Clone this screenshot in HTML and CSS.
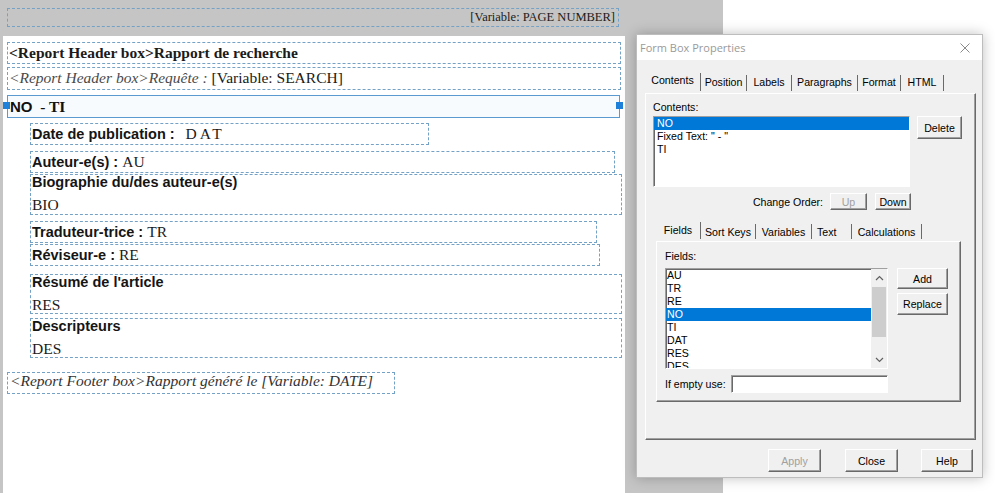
FILE: index.html
```html
<!DOCTYPE html>
<html lang="fr">
<head>
<meta charset="utf-8">
<title>Form Box Properties</title>
<link rel="stylesheet" href="styles.css">
</head>
<body>
<div class="screen">
  <div class="workspace">
    <div class="band">
      <div class="dbox pagenum">[Variable: PAGE NUMBER]</div>
    </div>
    <div class="page">
      <div class="dbox hdr1">&lt;Report Header box&gt;Rapport de recherche</div>
      <div class="dbox hdr2"><i class="note">&lt;Report Header box&gt;Requête :</i> [Variable: SEARCH]</div>
      <div class="selbox"><span class="handle hl"></span><b class="sans">NO</b><b class="serifb">&nbsp; - TI</b><span class="handle hr"></span></div>
      <div class="dbox field f-date"><span class="lbl">Date de publication :</span> <span class="val dat">&nbsp;DAT</span></div>
      <div class="dbox field f-aut"><span class="lbl">Auteur-e(s) :</span> <span class="val">AU</span></div>
      <div class="dbox field two f-bio"><span class="lbl">Biographie du/des auteur-e(s)</span><span class="val">BIO</span></div>
      <div class="dbox field f-trad"><span class="lbl">Traduteur-trice :</span> <span class="val">TR</span></div>
      <div class="dbox field f-rev"><span class="lbl">Réviseur-e :</span> <span class="val">RE</span></div>
      <div class="dbox field two f-res"><span class="lbl">Résumé de l'article</span><span class="val">RES</span></div>
      <div class="dbox field two f-des"><span class="lbl">Descripteurs</span><span class="val">DES</span></div>
      <div class="dbox footer"><i>&lt;Report Footer box&gt;Rapport généré le [Variable: DATE]</i></div>
    </div>
  </div>

  <div class="dialog">
    <div class="titlebar">
      <span>Form Box Properties</span>
      <svg class="closex" width="10" height="10" viewBox="0 0 10 10"><path d="M0.5 0.5 L9.5 9.5 M9.5 0.5 L0.5 9.5" stroke="#8a8a8a" stroke-width="1" fill="none"/></svg>
    </div>
    <div class="dbody">
      <div class="tabs outer-tabs">
        <div class="tab on">Contents</div>
        <div class="tab">Position</div>
        <div class="tab">Labels</div>
        <div class="tab">Paragraphs</div>
        <div class="tab">Format</div>
        <div class="tab">HTML</div>
      </div>
      <div class="panel outer-panel">
        <div class="dlabel">Contents:</div>
        <div class="row1">
          <div class="listbox list1">
            <div class="item sel">NO</div>
            <div class="item">Fixed Text: " - "</div>
            <div class="item">TI</div>
          </div>
          <div class="btn b-delete">Delete</div>
        </div>
        <div class="orderrow">
          <span>Change Order:</span>
          <div class="btn b-up disabled">Up</div>
          <div class="btn b-down">Down</div>
        </div>
        <div class="inner">
          <div class="tabs inner-tabs">
            <div class="tab on">Fields</div>
            <div class="tab">Sort Keys</div>
            <div class="tab">Variables</div>
            <div class="tab t-left">Text</div>
            <div class="tab">Calculations</div>
          </div>
          <div class="panel inner-panel">
            <div class="dlabel">Fields:</div>
            <div class="row2">
              <div class="listbox list2">
                <div class="items">
                  <div class="item">AU</div>
                  <div class="item">TR</div>
                  <div class="item">RE</div>
                  <div class="item sel">NO</div>
                  <div class="item">TI</div>
                  <div class="item">DAT</div>
                  <div class="item">RES</div>
                  <div class="item">DES</div>
                </div>
                <div class="scrollbar">
                  <div class="arrow"><svg width="9" height="6" viewBox="0 0 9 6"><path d="M1 5 L4.5 1.5 L8 5" stroke="#606060" stroke-width="1.2" fill="none"/></svg></div>
                  <div class="thumb"></div>
                  <div class="track"></div>
                  <div class="arrow"><svg width="9" height="6" viewBox="0 0 9 6"><path d="M1 1 L4.5 4.5 L8 1" stroke="#606060" stroke-width="1.2" fill="none"/></svg></div>
                </div>
              </div>
              <div class="sidebtns">
                <div class="btn b-add">Add</div>
                <div class="btn b-replace">Replace</div>
              </div>
            </div>
            <div class="emptyrow">
              <span class="emptylbl">If empty use:</span>
              <div class="input"></div>
            </div>
          </div>
        </div>
      </div>
      <div class="foot">
        <div class="btn b-apply disabled">Apply</div>
        <div class="btn b-close">Close</div>
        <div class="btn b-help">Help</div>
      </div>
    </div>
  </div>
</div>
</body>
</html>
```

FILE: styles.css
```css
* { box-sizing: border-box; margin: 0; padding: 0; }

body {
  margin: 0;
  width: 995px;
  height: 493px;
  overflow: hidden;
  background: #ffffff;
  font-family: "Liberation Serif", "Times New Roman", serif;
  color: #1b1b1b;
}

.screen {
  position: relative;
  display: flex;
  height: 493px;
}

/* ---------- report workspace ---------- */
.workspace {
  width: 723px;
  height: 493px;
  background: #c5c5c5;
  display: flex;
  flex-direction: column;
}

.band {
  height: 36px;
  padding: 8px 0 0 7px;
}

.page {
  margin-left: 3px;
  width: 622px;
  flex: 1;
  background: #ffffff;
  padding: 6px 0 0 4px;
}

.dbox { border: 1px dashed #74a2c6; }

.pagenum {
  width: 612px;
  height: 19px;
  text-align: right;
  font-size: 12.5px;
  line-height: 17px;
  padding-right: 3px;
}

.hdr1 {
  width: 614px;
  height: 22px;
  font-weight: bold;
  font-size: 15.5px;
  line-height: 19px;
  padding-left: 1px;
}

.hdr2 {
  margin-top: 3px;
  width: 614px;
  height: 23px;
  font-size: 15.5px;
  line-height: 19px;
  padding-left: 1px;
}
.hdr2 .note { color: #4a4a4a; }

.selbox {
  position: relative;
  margin-top: 5px;
  width: 613px;
  height: 23px;
  border: 1px solid #5a9ad0;
  background: #f8fbfe;
  line-height: 21px;
  padding-left: 2px;
  color: #111;
}
.selbox .sans {
  font-family: "Liberation Sans", Arial, sans-serif;
  font-size: 15px;
}
.selbox .serifb {
  font-family: "Liberation Serif", "Times New Roman", serif;
  font-size: 15.5px;
}

.handle {
  position: absolute;
  top: 6px;
  width: 7px;
  height: 7px;
  background: #1f80da;
}
.hl { left: -5px; }
.hr { right: -4px; }

.field {
  margin-left: 23px;
  height: 22px;
  line-height: 19px;
  padding-left: 1px;
  white-space: nowrap;
}
.lbl {
  font-family: "Liberation Sans", Arial, sans-serif;
  font-weight: bold;
  font-size: 14.5px;
  color: #151515;
}
.val { font-size: 15.5px; }
.dat { letter-spacing: 3px; }

.field.two { height: 40px; }
.field.two .lbl { display: block; line-height: 15px; }
.field.two .val { display: block; line-height: 17px; margin-top: 6px; }

.f-date { margin-top: 5px; width: 399px; }
.f-aut  { margin-top: 6px; width: 585px; }
.f-bio  { margin-top: 1px; width: 592px; height: 41px !important; }
.f-trad { margin-top: 6px; width: 567px; }
.f-rev  { margin-top: 1px; width: 570px; }
.f-res  { margin-top: 8px; width: 592px; }
.f-des  { margin-top: 4px; width: 592px; }

.footer {
  margin-top: 14px;
  width: 388px;
  height: 22px;
  font-size: 15.5px;
  line-height: 15px;
  padding-left: 2px;
  color: #333;
}

/* ---------- dialog ---------- */
.dialog {
  position: absolute;
  left: 636px;
  top: 34px;
  width: 347px;
  height: 444px;
  background: #f0f0f0;
  border: 1px solid #bdbdbd;
  box-shadow: 0 0 12px rgba(0, 0, 0, 0.25);
  font-family: "Liberation Sans", Arial, sans-serif;
  font-size: 10.6px;
  color: #000;
}

.titlebar {
  height: 25px;
  background: #ffffff;
  display: flex;
  align-items: center;
  justify-content: space-between;
  padding: 0 12px 0 3px;
  font-family: "Open Sans", "Noto Sans", sans-serif;
  font-size: 11px;
  color: #9a9a9a;
}

.dbody { padding: 13px 7px 0 8px; }

.tabs {
  display: grid;
  align-items: start;
}
.outer-tabs {
  height: 20px;
  width: 299px;
  grid-template-columns: 56px 46px 45px 66px 43px 43px;
}
.inner-tabs {
  height: 19px;
  width: 266px;
  grid-template-columns: 45px 55px 56px 40px 70px;
}
.tab {
  margin-top: 2px;
  height: 16px;
  line-height: 14px;
  text-align: center;
  border-right: 1px solid #6a6a6a;
  white-space: nowrap;
}
.tab.on { margin-top: 0; height: 18px; }
.inner-tabs .tab { height: 15px; line-height: 17px; }
.inner-tabs .tab.on { height: 17px; line-height: 17px; }
.t-left { text-align: left; padding-left: 5px; }

.panel {
  border-top: 1px solid #ffffff;
  border-left: 1px solid #ffffff;
  border-right: 1px solid #6a6a6a;
  border-bottom: 1px solid #6a6a6a;
  box-shadow: inset -1px -1px 0 #a0a0a0;
}
.outer-panel {
  width: 331px;
  height: 347px;
  padding: 7px 0 0 7px;
}

.dlabel { line-height: 13px; height: 13px; }

.listbox {
  background: #ffffff;
  border: 1px solid;
  border-color: #a0a0a0 #ffffff #ffffff #a0a0a0;
  box-shadow: inset 1px 1px 0 #696969;
  overflow: hidden;
}
.item {
  height: 13px;
  line-height: 13px;
  white-space: nowrap;
}
.item.sel { background: #0078d7; color: #ffffff; }

.row1 { display: flex; margin-top: 2px; }
.list1 { width: 257px; height: 71px; }
.list1 .item { padding-left: 3px; }

.btn {
  display: flex;
  align-items: center;
  justify-content: center;
  background: #f0f0f0;
  border: 1px solid;
  border-color: #ffffff #696969 #696969 #ffffff;
  box-shadow: inset -1px -1px 0 #a0a0a0;
}
.btn.disabled { color: #a0a0a0; }

.b-delete { margin-left: 7px; width: 45px; height: 23px; }

.orderrow {
  display: flex;
  justify-content: flex-end;
  align-items: center;
  width: 258px;
  height: 17px;
  margin-top: 6px;
}
.b-up { margin-left: 7px; width: 37px; height: 17px; }
.b-down { margin-left: 8px; width: 36px; height: 17px; }

.inner { margin: 12px 0 0 3px; width: 305px; }
.inner-panel {
  width: 305px;
  height: 161px;
  padding: 8px 0 0 8px;
}

.row2 { display: flex; margin-top: 5px; }
.list2 {
  display: flex;
  width: 223px;
  height: 101px;
}
.list2 .items { flex: 1; }
.list2 .item { padding-left: 1px; }

.scrollbar {
  width: 16px;
  display: flex;
  flex-direction: column;
  background: #f0f0f0;
}
.arrow {
  height: 17px;
  display: flex;
  align-items: center;
  justify-content: center;
}
.thumb {
  height: 50px;
  margin: 1px 1px 0 1px;
  background: #cdcdcd;
}
.track { flex: 1; }

.sidebtns { margin-left: 9px; display: flex; flex-direction: column; }
.b-add { width: 51px; height: 21px; }
.b-replace { width: 51px; height: 22px; margin-top: 4px; }

.emptyrow {
  display: flex;
  align-items: center;
  margin-top: 6px;
  height: 18px;
}
.emptylbl { width: 66px; white-space: nowrap; }
.input {
  width: 157px;
  height: 18px;
  background: #ffffff;
  border: 1px solid;
  border-color: #a0a0a0 #ffffff #ffffff #a0a0a0;
  box-shadow: inset 1px 1px 0 #696969;
}

.foot {
  display: flex;
  justify-content: flex-end;
  padding-top: 9px;
  margin-right: 2px;
}
.b-apply { width: 53px; height: 23px; }
.b-close { width: 53px; height: 23px; margin-left: 24px; }
.b-help { width: 52px; height: 23px; margin-left: 23px; }
```
